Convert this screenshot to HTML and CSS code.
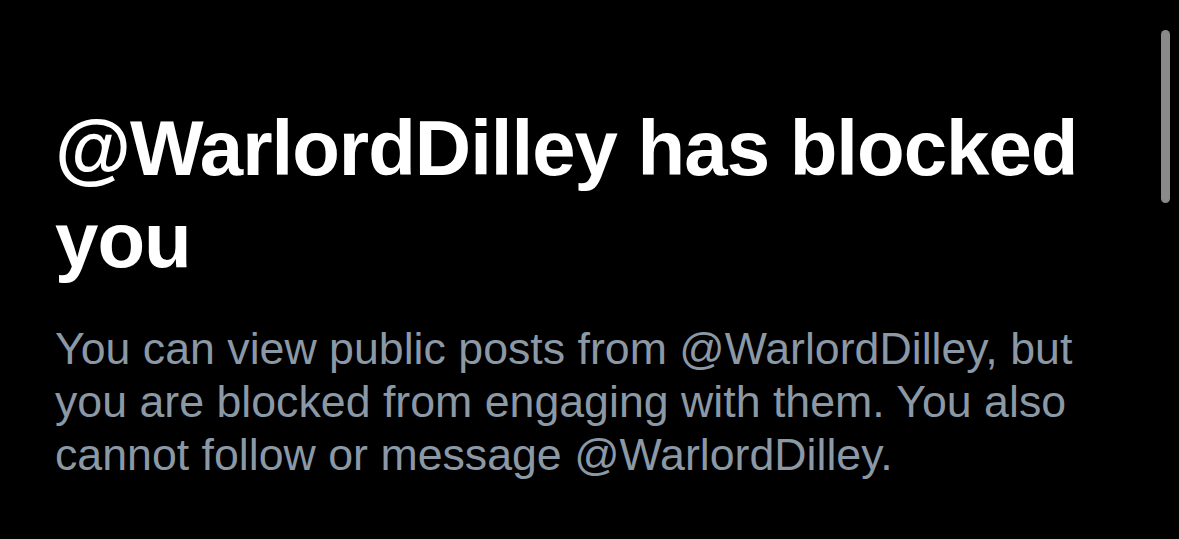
FILE: index.html
```
<!DOCTYPE html>
<html>
<head>
	<meta charset="utf-8">
	<title>Blocked</title>
	<link rel="stylesheet" href="styles.css">
</head>
<body>
	<div class="page">
		<div class="blocked">
			<h1 class="blocked-title">@WarlordDilley has blocked you</h1>
			<p class="blocked-text">You can view public posts from @WarlordDilley, but you are blocked from engaging with them. You also cannot follow or message @WarlordDilley.</p>
		</div>
		<div class="scrollbar"><div class="scrollbar-thumb"></div></div>
	</div>
</body>
</html>
```
FILE: styles.css
```
html, body {
	background: #000;
	margin: 0;
	padding: 0;
	height: 100%;
	overflow: hidden;
}
.page {
	display: flex;
	justify-content: space-between;
	height: 100%;
}
.blocked {
	padding: 102px 0 0 55px;
	width: 1040px;
}
.blocked-title {
	color: #fff;
	font: bold 78px/92px "Liberation Sans", Arial, sans-serif;
	letter-spacing: -1px;
	margin: 0;
}
.blocked-text {
	color: #8b98a5;
	font: 44.7px/53px "Liberation Sans", Arial, sans-serif;
	margin: 36px 0 0;
}
.scrollbar {
	padding: 30px 9px 0 0;
}
.scrollbar-thumb {
	background: #8a8a8a;
	border-radius: 5px;
	height: 173px;
	width: 9px;
}
```
